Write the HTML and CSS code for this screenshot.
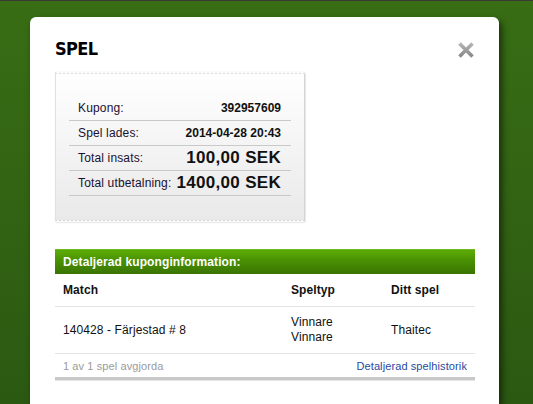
FILE: index.html
```html
<!DOCTYPE html>
<html>
<head>
<meta charset="utf-8">
<link rel="stylesheet" href="styles.css">
</head>
<body>
<div class="modal">
  <div class="modal-head">
    <h1 class="title">SPEL</h1>
    <svg class="close" width="18" height="18" viewBox="0 0 18 18">
      <defs>
        <linearGradient id="xg" x1="0" y1="0" x2="0" y2="1">
          <stop offset="0" stop-color="#b5b5b5"/>
          <stop offset="1" stop-color="#888"/>
        </linearGradient>
      </defs>
      <path d="M2.5 2.5 L15.5 15.5 M15.5 2.5 L2.5 15.5" stroke="url(#xg)" stroke-width="3.6" stroke-linecap="butt"/>
    </svg>
  </div>
  <div class="ticket">
    <div class="trow"><span class="lbl">Kupong:</span><span class="val">392957609</span></div>
    <div class="trow"><span class="lbl">Spel lades:</span><span class="val">2014-04-28 20:43</span></div>
    <div class="trow"><span class="lbl">Total insats:</span><span class="val big">100,00 SEK</span></div>
    <div class="trow"><span class="lbl">Total utbetalning:</span><span class="val big">1400,00 SEK</span></div>
  </div>
  <div class="details">
    <div class="bar">Detaljerad kuponginformation:</div>
    <div class="grid head">
      <div>Match</div><div>Speltyp</div><div>Ditt spel</div>
    </div>
    <div class="grid data">
      <div>140428 - Färjestad # 8</div><div>Vinnare<br>Vinnare</div><div>Thaitec</div>
    </div>
    <div class="foot">
      <span class="muted">1 av 1 spel avgjorda</span>
      <a class="link">Detaljerad spelhistorik</a>
    </div>
  </div>
</div>
</body>
</html>
```
FILE: styles.css
```css
html, body {
  margin: 0;
  height: 100%;
}
body {
  background: linear-gradient(#386d14, #2c5912);
  border-top: 1px solid #3a3a3a;
  box-sizing: border-box;
  overflow: hidden;
  font-family: "Liberation Sans", Arial, sans-serif;
  color: #111;
}
.modal {
  margin: 16px 0 0 30px;
  width: 469px;
  height: calc(100vh - 17px);
  background: #fff;
  border-radius: 6px 6px 0 0;
  box-shadow: 3px 4px 7px rgba(0, 0, 0, 0.55);
  padding: 22px 25px 0 25px;
  box-sizing: border-box;
}
.modal-head {
  display: flex;
  justify-content: space-between;
  align-items: flex-start;
  height: 20px;
}
.title {
  margin: 0;
  font-family: "DejaVu Sans Condensed", "DejaVu Sans", sans-serif;
  font-weight: bold;
  font-size: 18px;
  line-height: 20px;
  letter-spacing: -0.6px;
  color: #000;
}
.close {
  margin: 2px -1px 0 0;
}
.ticket {
  position: relative;
  margin-top: 13px;
  width: 249px;
  height: 149px;
  box-sizing: border-box;
  padding: 24px 13px 0 13px;
  background: linear-gradient(#ffffff, #e9e9e9);
  border-left: 1px solid #e2e2e2;
  box-shadow: 1px 1px 2px rgba(0, 0, 0, 0.25);
}
.ticket::before,
.ticket::after {
  content: "";
  position: absolute;
  left: 0;
  right: 0;
  height: 3px;
  background-image: radial-gradient(circle at 2px 0, #fff 1.5px, #d8d8d8 2px, transparent 2.6px);
  background-size: 4px 3px;
  background-repeat: repeat-x;
}
.ticket::before { top: 0; }
.ticket::after {
  bottom: -1px;
  background-image: radial-gradient(circle at 2px 3px, #fff 1.5px, #cfcfcf 2px, transparent 2.6px);
}
.trow {
  display: flex;
  justify-content: space-between;
  align-items: center;
  height: 24px;
  border-bottom: 1px solid #c9c9c9;
  padding: 0 10px 0 9px;
  font-size: 12px;
}
.lbl { color: #1a1030; letter-spacing: 0.15px; }
.val { font-weight: bold; }
.val.big { font-size: 17px; letter-spacing: 0.3px; }
.details {
  margin-top: 28px;
  width: 420px;
  font-size: 12px;
  letter-spacing: 0.1px;
}
.bar {
  height: 25px;
  line-height: 25px;
  padding-left: 8px;
  background: linear-gradient(#5aa806 0, #5aa806 2px, #4a9203 40%, #3a7401 100%);
  border-top: 1px solid #6cb923;
  box-sizing: border-box;
  color: #fff;
  font-weight: bold;
}
.grid {
  display: grid;
  grid-template-columns: 228px 100px 92px;
  align-items: center;
  border-bottom: 1px solid #e4e4e4;
}
.grid > div { padding-left: 8px; }
.head { height: 32px; font-weight: bold; }
.data { height: 46px; line-height: 15px; }
.foot {
  display: flex;
  justify-content: space-between;
  align-items: center;
  height: 23px;
  padding: 0 8px;
  font-size: 11px;
  border-bottom: 3px solid #c8c8c8;
  box-shadow: 0 1px 0 #e6e6e6;
}
.muted { color: #9a9a9a; }
.link { color: #2849a0; }
```
